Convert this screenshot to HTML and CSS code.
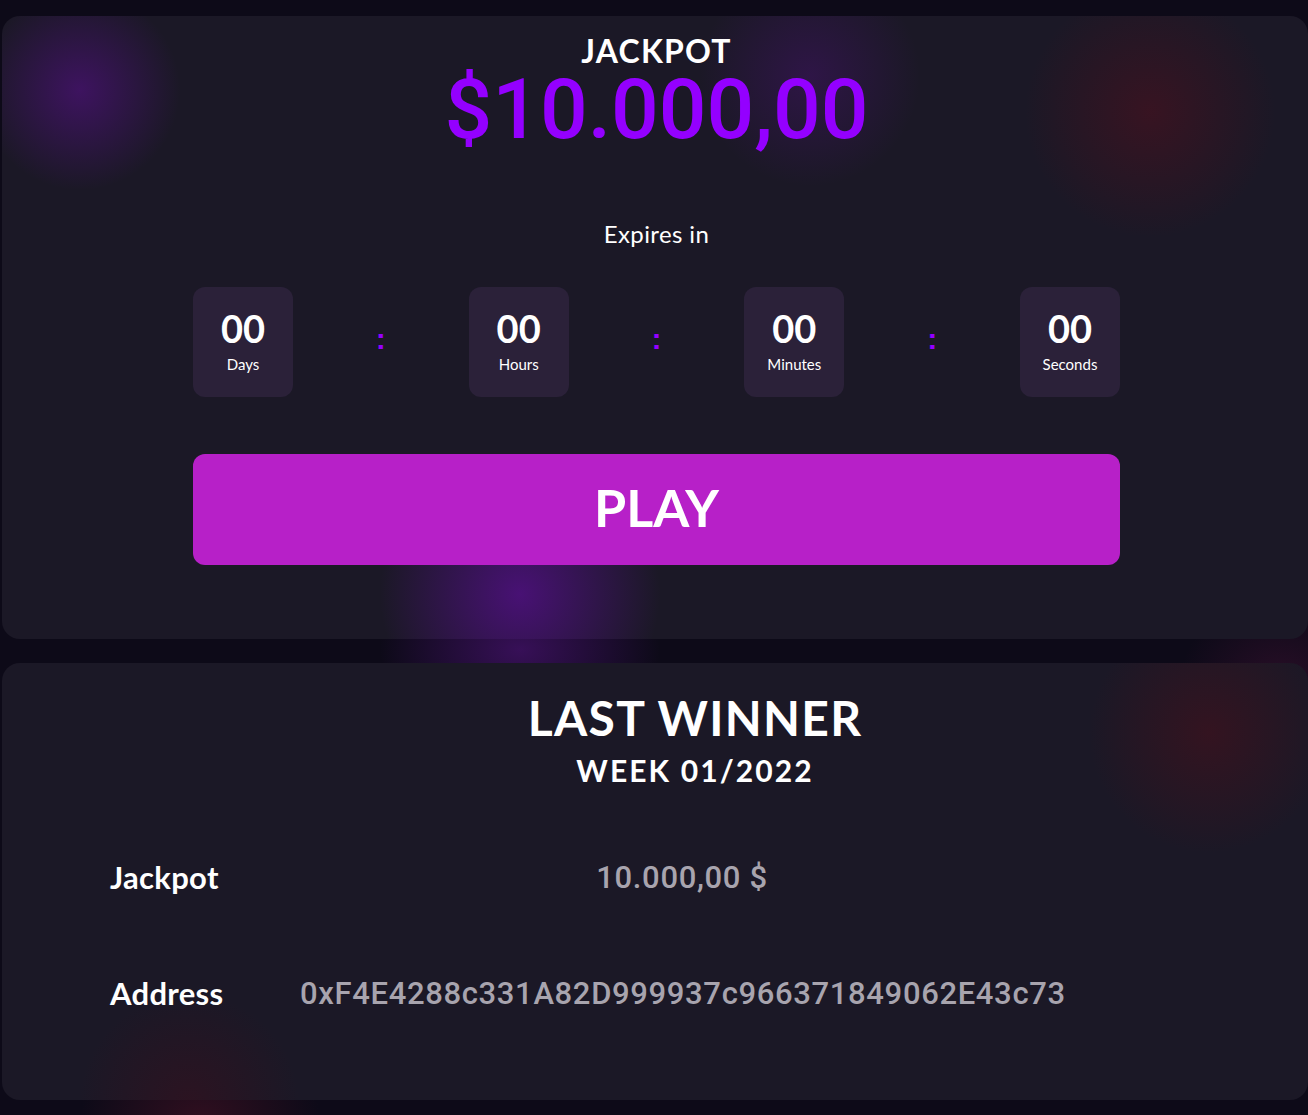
FILE: index.html
```html
<!DOCTYPE html>
<html lang="en">
<head>
  <meta charset="UTF-8" />
  <meta name="viewport" content="width=device-width, initial-scale=1.0"/>
  <title>Jackpot | Weekly Draw</title>
  <link rel="stylesheet" href="styles.css">
</head>
<body>

<main class="page">
  <!-- soft glows behind the cards -->
  <div class="glow glow-gap"></div>
  <div class="glow glow-bottom"></div>
  <div class="glow glow-right"></div>

  <section class="card jackpot-card">
    <h2 class="jackpot-title">JACKPOT</h2>
    <p class="jackpot-amount">$10.000,00</p>

    <p class="expires">Expires in</p>

    <div class="countdown">
      <div class="time-box"><span class="time-value">00</span><span class="time-label">Days</span></div>
      <span class="time-sep">:</span>
      <div class="time-box"><span class="time-value">00</span><span class="time-label">Hours</span></div>
      <span class="time-sep">:</span>
      <div class="time-box"><span class="time-value">00</span><span class="time-label">Minutes</span></div>
      <span class="time-sep">:</span>
      <div class="time-box"><span class="time-value">00</span><span class="time-label">Seconds</span></div>
    </div>

    <button class="play-btn">PLAY</button>
  </section>

  <section class="card winner-card">
    <div class="winner-head">
      <h2>LAST WINNER</h2>
      <h3>WEEK 01/2022</h3>
    </div>

    <div class="winner-rows">
      <span class="row-label">Jackpot</span>
      <span class="row-value">10.000,00 $</span>
      <span class="row-label">Address</span>
      <span class="row-value">0xF4E4288c331A82D999937c966371849062E43c73</span>
    </div>
  </section>

</main>

</body>
</html>
```

FILE: styles.css
```css
/* --- base --- */
* { box-sizing: border-box; margin: 0; padding: 0; }
body { background-color: #0d0a18; color: #fff; font-family: 'Lato', 'Noto Sans', sans-serif; }

.page { position: relative; overflow: hidden; width: 1308px; height: 1115px; padding: 16px 0 15px 2px; display: flex; flex-direction: column; gap: 24px; }

.glow { position: absolute; border-radius: 50%; pointer-events: none; }
.glow-gap { left: 380px; top: 560px; width: 280px; height: 180px; background: radial-gradient(closest-side, rgba(90, 20, 140, 0.55), transparent); }
.glow-bottom { left: 80px; top: 1030px; width: 240px; height: 180px; background: radial-gradient(closest-side, rgba(90, 20, 40, 0.45), transparent); }
.glow-right { left: 1180px; top: 600px; width: 200px; height: 160px; background: radial-gradient(closest-side, rgba(80, 20, 60, 0.4), transparent); }

.card { position: relative; width: 1306px; flex-shrink: 0; border-radius: 18px; background-color: #1b1826; }

/* --- jackpot card --- */
.jackpot-card {
  height: 623px;
  padding: 17px 0 0 3px;
  display: flex; flex-direction: column; align-items: center;
  background:
    radial-gradient(circle 100px at 78px 74px, rgba(70, 18, 110, 0.8), rgba(70, 18, 110, 0) 100%),
    radial-gradient(circle 140px at 518px 578px, rgba(80, 16, 130, 0.85), rgba(80, 16, 130, 0) 100%),
    radial-gradient(circle 110px at 808px 60px, rgba(70, 18, 110, 0.45), rgba(70, 18, 110, 0) 100%),
    radial-gradient(circle 125px at 1148px 96px, rgba(65, 18, 32, 0.75), rgba(65, 18, 32, 0) 100%),
    #1b1826;
}
.jackpot-title { font-size: 32px; line-height: 36px; font-weight: 700; letter-spacing: 1.2px; }
.jackpot-amount { font-family: 'Roboto', 'Liberation Sans', sans-serif; font-weight: 500; font-size: 84px; line-height: 82px; color: #9400ff; }
.expires { margin-top: 70px; font-size: 24px; line-height: 26px; letter-spacing: 0.4px; }

.countdown { margin-top: 40px; width: 927px; display: flex; justify-content: space-between; align-items: center; }
.time-box { width: 100px; height: 110px; border-radius: 12px; background-color: #2b2139; display: flex; flex-direction: column; align-items: center; padding-top: 21px; }
.time-value { font-size: 38px; line-height: 40px; font-weight: 700; }
.time-label { margin-top: 7px; font-size: 15px; line-height: 18px; }
.time-sep { color: #9400ff; font-family: 'Liberation Sans', sans-serif; font-size: 30px; font-weight: 700; line-height: 30px; margin-top: -6px; }

.play-btn { margin-top: 57px; width: 927px; height: 111px; padding-bottom: 6px; border: none; border-radius: 12px; background-color: #b720c8; color: #fff; font-family: 'Lato', sans-serif; font-size: 52px; font-weight: 700; cursor: pointer; }

/* --- last winner card --- */
.winner-card {
  height: 437px;
  padding: 29px 0 0 108px;
  background:
    radial-gradient(circle 120px at 1207px 70px, rgba(60, 18, 30, 0.75), rgba(60, 18, 30, 0) 100%),
    radial-gradient(circle 110px at 187px 440px, rgba(55, 16, 30, 0.6), rgba(55, 16, 30, 0) 100%),
    #1b1826;
}
.winner-head { text-align: center; margin-left: -28px; width: 1226px; }
.winner-head h2 { font-size: 48px; line-height: 52px; font-weight: 700; letter-spacing: 1.3px; }
.winner-head h3 { margin-top: 9px; font-size: 30px; line-height: 34px; font-weight: 700; letter-spacing: 2.1px; }

.winner-rows { margin-top: 60px; display: grid; grid-template-columns: 190px 764px; grid-auto-rows: 60px; row-gap: 56px; align-items: center; }
.row-label { font-size: 31px; font-weight: 700; letter-spacing: 0.3px; }
.row-value { text-align: center; font-family: 'Roboto', 'Liberation Sans', sans-serif; font-weight: 500; font-size: 31px; letter-spacing: 0.65px; color: #a8a4ae; }
```
